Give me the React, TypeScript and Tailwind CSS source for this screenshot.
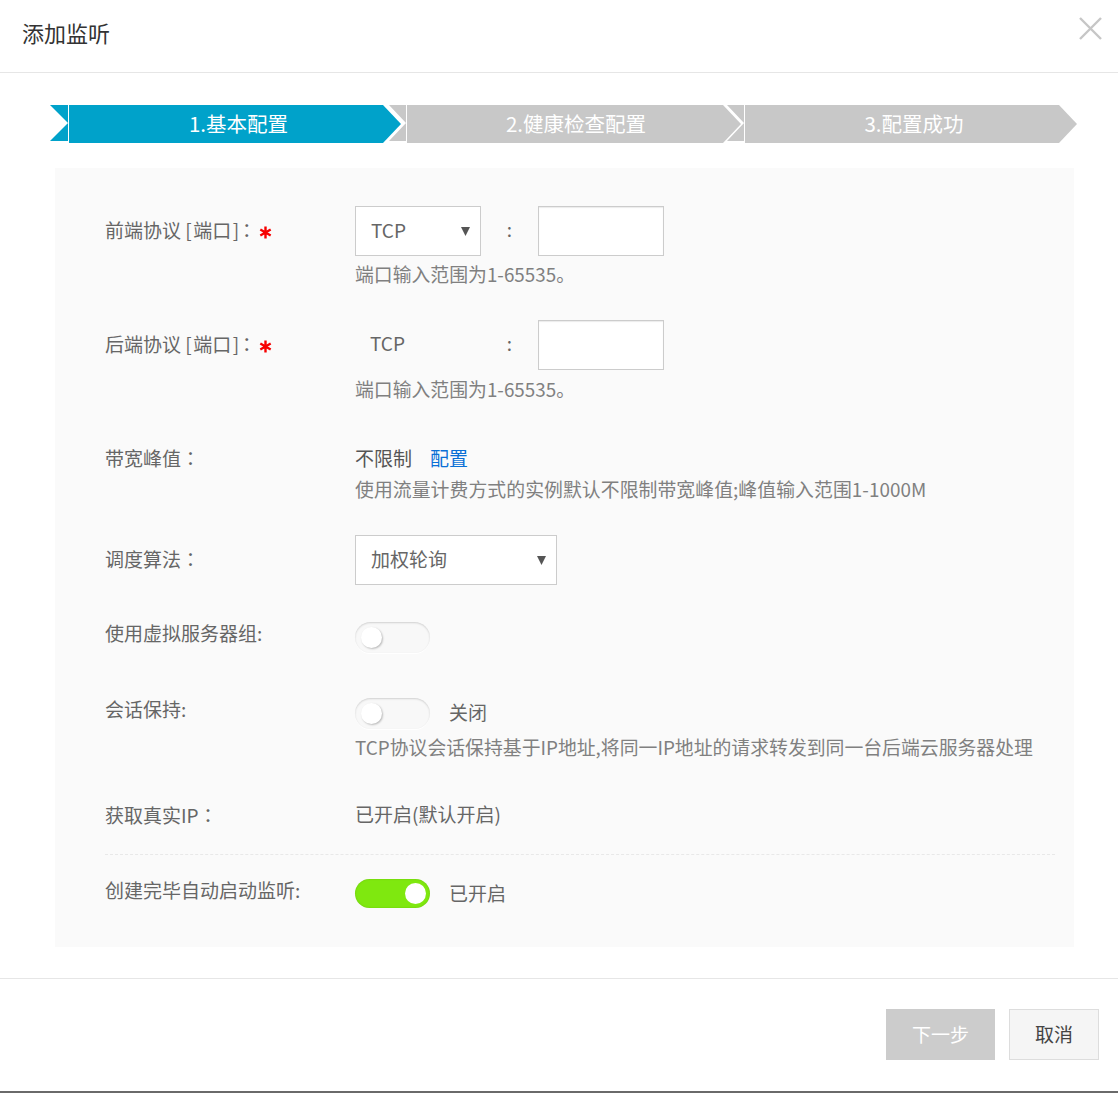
import type { ReactNode } from 'react'

const notch = '[clip-path:polygon(0_0,100%_0,100%_100%,0_100%,100%_50%)]'
const arrow = '[clip-path:polygon(0_0,calc(100%-18px)_0,100%_50%,calc(100%-18px)_100%,0_100%)]'

function Label({ children, className = '' }: { children: ReactNode; className?: string }) {
  return <div className={`w-[250px] shrink-0 flex items-center whitespace-pre text-[#666] ${className}`}>{children}</div>
}

function Hint({ children, className = '' }: { children: ReactNode; className?: string }) {
  return <div className={`flex items-center text-[18.85px] text-[#808080] ${className}`}>{children}</div>
}

// full width colon sits centered in the TC cut, like the reference
function Colon({ className = '' }: { className?: string }) {
  return <span className={`font-['Noto_Sans_CJK_TC',sans-serif] ${className}`}>：</span>
}

function PortLabel({ side }: { side: string }) {
  return (
    <Label className="h-[50px] -mt-[1px]">
      {side}协议 [<span className="mx-[1.5px]">端口</span>]
      <Colon className="-ml-[2px]" />
      <svg className="ml-[3px] mt-[5px]" width="13" height="13" viewBox="0 0 13 13" stroke="#f60000" strokeWidth="2.4">
        <path d="M6.5 0.5v12M1.3 3.5l10.4 6M11.7 3.5l-10.4 6" />
      </svg>
    </Label>
  )
}

function PortInput() {
  return <input className="w-[126px] h-[50px] bg-white border border-[#ccc] shadow-[inset_0_1px_1px_rgba(0,0,0,0.08)] outline-none" />
}

function Select({ value, width }: { value: string; width: string }) {
  return (
    <div className={`relative h-[50px] bg-white border border-[#ccc] pl-[15px] pb-[2px] flex items-center text-[#666] ${width}`}>
      {value}
      <svg className="absolute right-[10px] top-[20px]" width="9" height="9" viewBox="0 0 9 9" fill="#555">
        <path d="M0 0h9L4.5 9z" />
      </svg>
    </div>
  )
}

function Toggle({ on = false }: { on?: boolean }) {
  if (on) {
    return (
      <div className="w-[75px] h-[29px] rounded-full bg-[#7fe80f] flex items-center justify-end pr-[4px] shadow-[inset_0_0_2px_rgba(60,120,0,0.35)]">
        <div className="w-[21px] h-[21px] rounded-full bg-white" />
      </div>
    )
  }
  return (
    <div className="w-[75px] h-[31px] rounded-full bg-[#f8f8f8] flex items-center pl-[6px] shadow-[inset_0_1px_2px_rgba(0,0,0,0.16),0_1px_0_#fff]">
      <div className="w-[21px] h-[21px] rounded-full bg-white shadow-[1px_1px_2px_rgba(0,0,0,0.25)]" />
    </div>
  )
}

export default function App() {
  return (
    <div className="w-[1118px] h-[1093px] bg-white flex flex-col text-[19px] font-['Noto_Sans_CJK_SC','Noto_Sans',sans-serif] overflow-hidden">
      <div className="h-[73px] shrink-0 border-b border-[#e6e6e6] pl-[22px] pr-[16px] flex items-center justify-between">
        <span className="text-[22px] text-[#333] pb-[8px]">添加监听</span>
        <svg className="mb-[15px]" width="23" height="23" viewBox="0 0 23 23" stroke="#c6c6c6" strokeWidth="2.4">
          <path d="M1 1l21 21M22 1L1 22" />
        </svg>
      </div>

      <div className="mt-[32px] ml-[50px] flex items-start h-[38px] text-[20.5px] text-white">
        <div className={`w-[18px] h-[36px] bg-[#00a2ca] ${notch}`} />
        <div className={`ml-[1px] w-[332px] h-[38px] pl-[7px] pb-[2px] bg-[#00a2ca] flex items-center justify-center ${arrow}`}>1.基本配置</div>
        <div className={`-ml-[12px] w-[17px] h-[36px] bg-[#c8c8c8] ${notch}`} />
        <div className={`ml-[1px] w-[334px] h-[38px] pl-[4px] pb-[2px] bg-[#c8c8c8] flex items-center justify-center ${arrow}`}>2.健康检查配置</div>
        <div className={`-ml-[14px] w-[17px] h-[36px] bg-[#c8c8c8] ${notch}`} />
        <div className={`ml-[1px] w-[332px] h-[38px] pl-[6px] pb-[2px] bg-[#c8c8c8] flex items-center justify-center ${arrow}`}>3.配置成功</div>
      </div>

      <div className="mt-[25px] ml-[55px] w-[1019px] h-[779px] shrink-0 bg-[#fafafa] pl-[50px] pr-[19px] pt-[38px]">
        <div className="flex">
          <PortLabel side="前端" />
          <div>
            <div className="flex items-center">
              <Select value="TCP" width="w-[126px]" />
              <span className="w-[57px] pb-[3px] text-center text-[#666]">:</span>
              <PortInput />
            </div>
            <Hint className="h-[37px]">端口输入范围为1-65535。</Hint>
          </div>
        </div>

        <div className="flex mt-[27px]">
          <PortLabel side="后端" />
          <div>
            <div className="flex items-center">
              <div className="w-[126px] pl-[15px] text-[#666] -mt-[4px]">TCP</div>
              <span className="w-[57px] pb-[3px] text-center text-[#666]">:</span>
              <PortInput />
            </div>
            <Hint className="h-[38px]">端口输入范围为1-65535。</Hint>
          </div>
        </div>

        <div className="flex mt-[33px]">
          <Label className="h-[34px]">带宽峰值<Colon /></Label>
          <div>
            <div className="h-[34px] flex items-center text-[#555]">
              不限制
              <a className="ml-[18px] text-[#0a6fd6]">配置</a>
            </div>
            <Hint className="h-[28px] tracking-[0.06px]">使用流量计费方式的实例默认不限制带宽峰值;峰值输入范围1-1000M</Hint>
          </div>
        </div>

        <div className="flex mt-[32px]">
          <Label className="h-[48px]">调度算法<Colon /></Label>
          <Select value="加权轮询" width="w-[202px]" />
        </div>

        <div className="flex mt-[37px]">
          <Label className="h-[23px]">使用虚拟服务器组:</Label>
          <Toggle />
        </div>

        <div className="flex mt-[45px]">
          <Label className="h-[23px]">会话保持:</Label>
          <div>
            <div className="flex items-center text-[#666]">
              <Toggle />
              <span className="ml-[19px] -mt-[3px]">关闭</span>
            </div>
            <Hint className="h-[36px]">TCP协议会话保持基于IP地址,将同一IP地址的请求转发到同一台后端云服务器处理</Hint>
          </div>
        </div>

        <div className="flex mt-[33px] h-[34px] items-center">
          <Label>获取真实IP<Colon /></Label>
          <span className="text-[#666] pb-[2px]">已开启(默认开启)</span>
        </div>

        <div className="mt-[22px] border-t border-dashed border-[#e8e8e8]" />

        <div className="flex mt-[24px]">
          <Label className="h-[23px]">创建完毕自动启动监听:</Label>
          <div className="flex items-center text-[#666]">
            <Toggle on />
            <span className="ml-[19px]">已开启</span>
          </div>
        </div>
      </div>

      <div className="mt-[31px] flex-1 border-t border-[#e6e6e6] border-b-2 border-b-[#6a6a6a] pt-[30px] pr-[19px] flex items-start justify-end gap-[14px]">
        <button className="w-[109px] h-[51px] bg-[#ccc] text-white">下一步</button>
        <button className="w-[90px] h-[51px] bg-[#f5f5f5] border border-[#ddd] text-[#444]">取消</button>
      </div>
    </div>
  )
}
